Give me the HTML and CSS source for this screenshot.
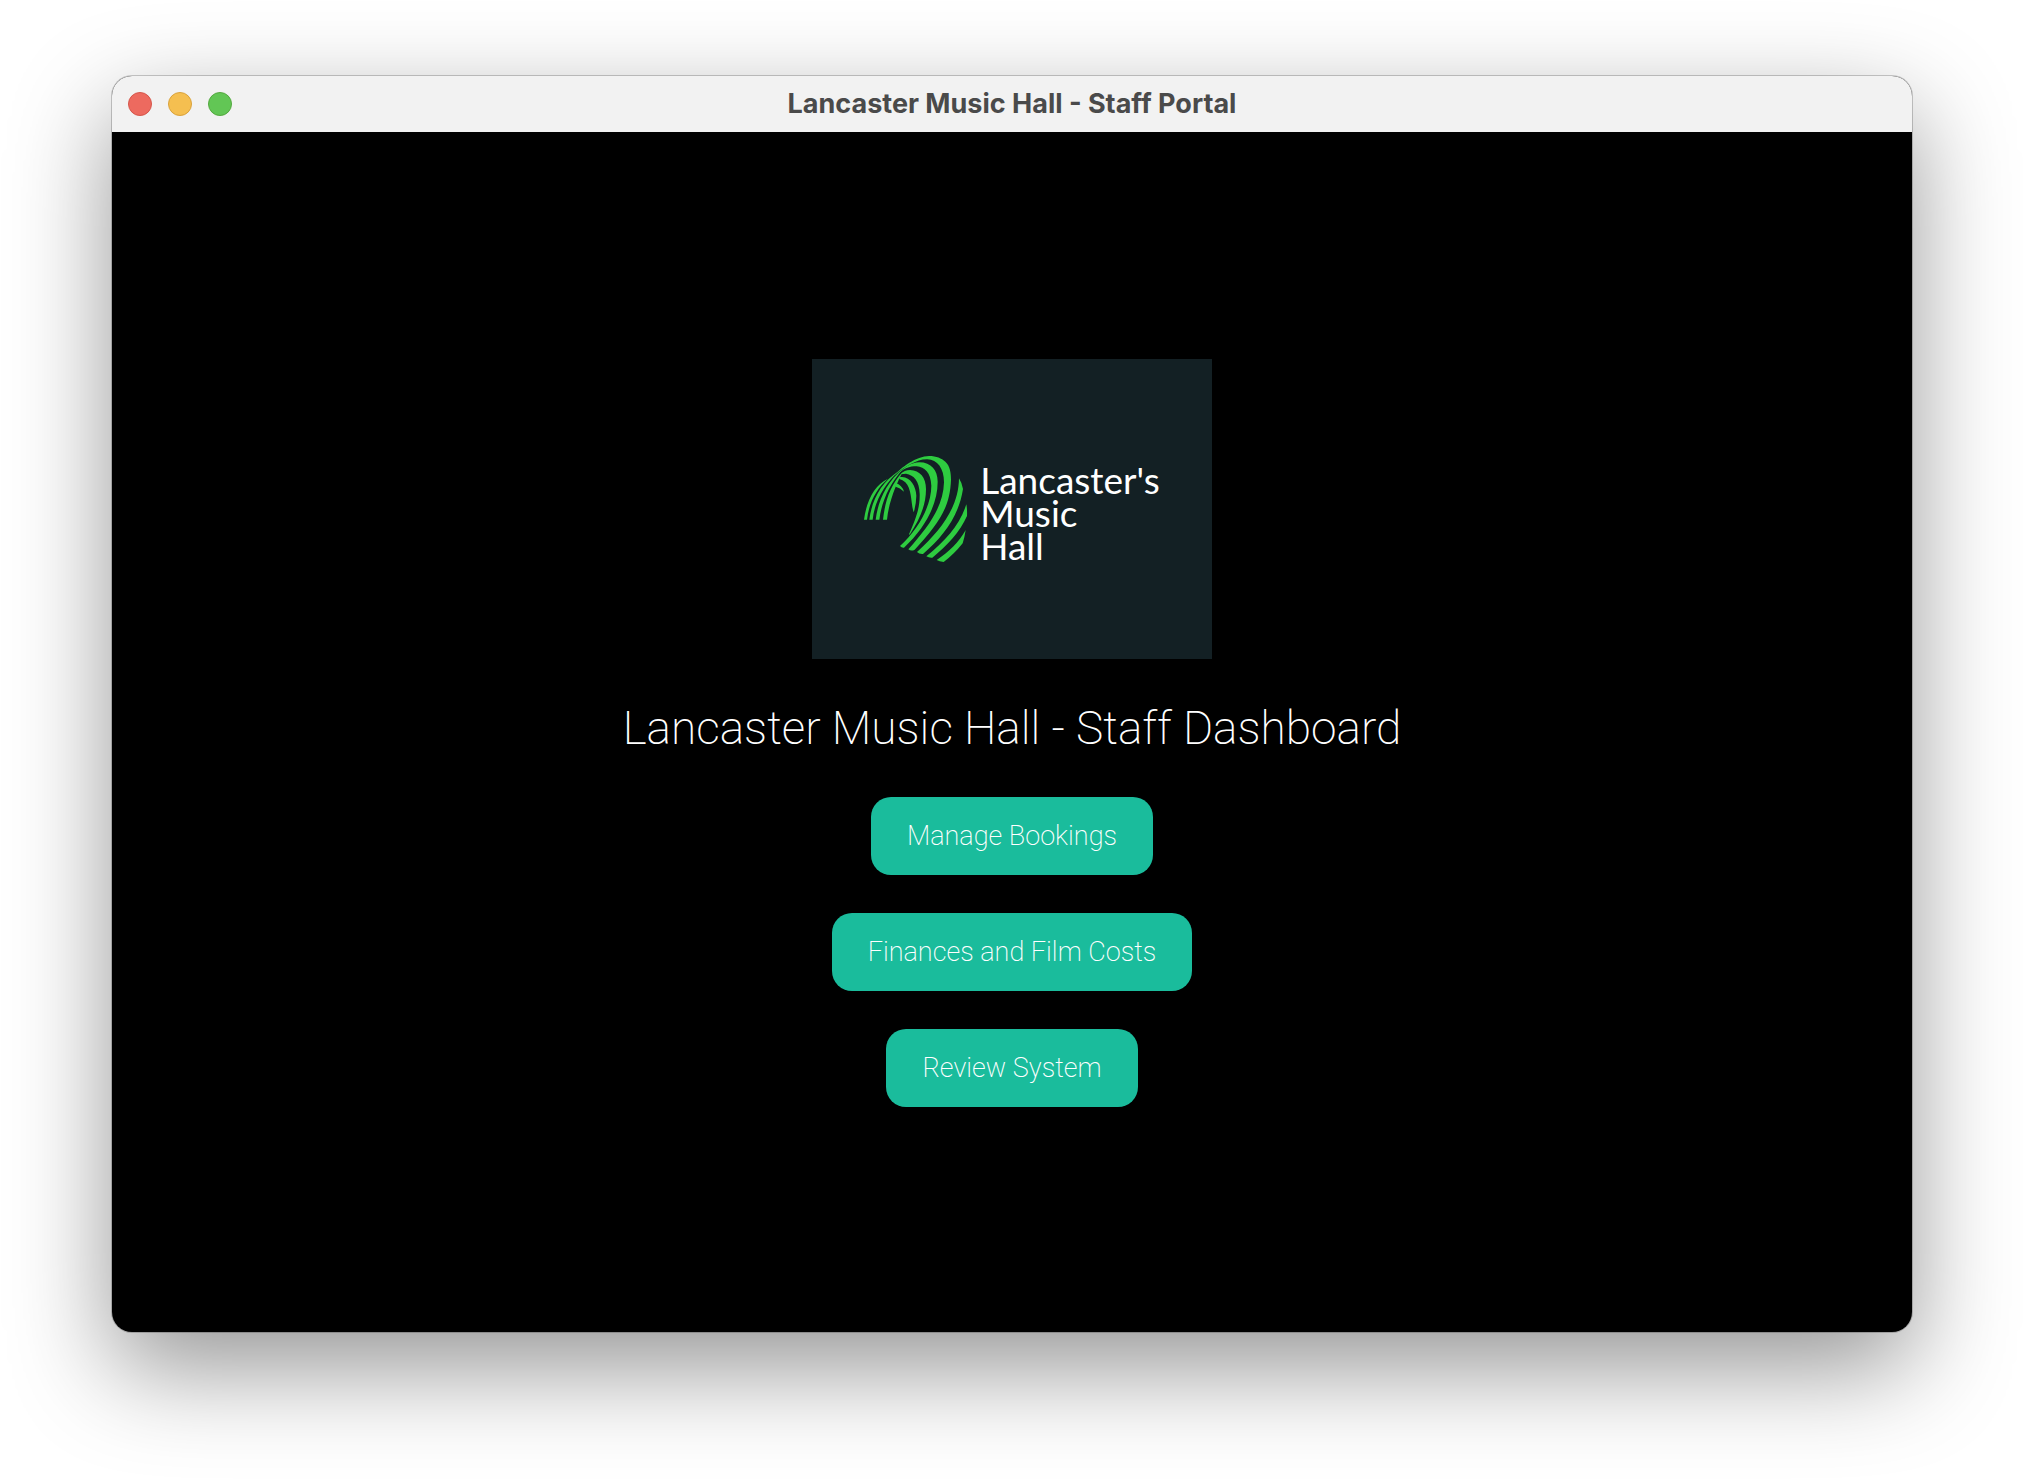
FILE: index.html
```html
<!DOCTYPE html>
<html lang="en">
<head>
  <meta charset="utf-8">
  <meta name="viewport" content="width=device-width, initial-scale=1">
  <title>Lancaster Music Hall - Staff Portal</title>
  <link rel="stylesheet" href="styles.css">
</head>
<body>
  <div class="window">
    <header class="titlebar">
      <div class="controls">
        <button type="button" class="control control-close" aria-label="Close"></button>
        <button type="button" class="control control-minimise" aria-label="Minimise"></button>
        <button type="button" class="control control-zoom" aria-label="Zoom"></button>
      </div>
      <div class="window-title">Lancaster Music Hall - Staff Portal</div>
    </header>
    <main class="dashboard">
      <div class="logo">
        <svg class="logo-mark" viewBox="30 30 312 324" aria-hidden="true">
          <!-- left legs -->
          <path d="M30 224C38 165 62 120 102 101C70 128 45 170 39 224Z"/>
          <path d="M46 224C53 168 80 112 134 79C95 114 62 165 56 224Z"/>
          <path d="M65 224C72 170 94 114 150 68C104 120 83 170 76 224Z"/>
          <path d="M87 224C93 170 108 120 146 81C130 112 105 165 99 224Z"/>
          <!-- arches -->
          <path d="M120 92C140 68 188 33 225 33C248 33 262 40 274 50C288 62 291 84 291 104C288 190 252 238 182 314Q172 320 163 313C226 242 268 184 270 112C270 70 250 44 220 43C190 42 150 66 120 92Z"/>
          <path d="M126 94C150 66 172 52 196 52C232 52 251 76 251 110C251 180 212 250 150 308Q143 309 138 303C196 250 232 180 232 122C230 82 212 66 188 64C166 64 150 68 126 94Z"/>
          <path d="M140 88C148 78 156 75 168 75C198 76 216 98 216 132C216 180 198 222 167 269L165 268C188 216 198 186 197 146C196 108 180 90 156 86Q148 86 140 88Z"/>
          <path d="M136 97C166 90 186 122 187 152Q186 182 179 202C171 180 174 130 154 112Q146 105 136 102Z"/>
          <path d="M125 114Q144 120 150 140Q138 128 125 125Z"/>
          <!-- lower right bands -->
          <path d="M315 100Q324 114 327 132C314 216 266 276 207 327Q196 328 189 321C262 254 314 186 315 100Z"/>
          <path d="M337 178Q340 194 339 213C318 260 280 302 235 338Q225 339 217 334C276 286 318 238 337 178Z"/>
          <path d="M335 255Q332 276 326 295Q300 328 269 351Q256 350 248 345C286 320 314 292 335 255Z"/>
        </svg>
        <div class="logo-name">Lancaster's<br>Music<br>Hall</div>
      </div>
      <h1 class="heading">Lancaster Music Hall - Staff Dashboard</h1>
      <button type="button" class="action">Manage Bookings</button>
      <button type="button" class="action">Finances and Film Costs</button>
      <button type="button" class="action">Review System</button>
    </main>
  </div>
</body>
</html>
```
FILE: styles.css
```css
* {
  box-sizing: border-box;
}

body {
  display: flex;
  min-height: 100vh;
  margin: 0;
  padding: 76px 112px 148px;
  background: #fff;
  font-family: Roboto, "Liberation Sans", sans-serif;
}

.window {
  display: flex;
  flex: 1;
  flex-direction: column;
  overflow: hidden;
  border-radius: 20px;
  background: #000;
  box-shadow: 0 0 0 1px rgba(0, 0, 0, 0.2), 0 36px 100px rgba(0, 0, 0, 0.42);
}

.titlebar {
  display: grid;
  grid-template-columns: 1fr auto 1fr;
  align-items: center;
  height: 56px;
  padding: 0 16px;
  background: #f2f2f2;
}

.controls {
  display: flex;
  gap: 16px;
}

.control {
  width: 24px;
  height: 24px;
  padding: 0;
  border: 1px solid;
  border-radius: 50%;
}

.control-close {
  border-color: #d5564b;
  background: #ed6a5f;
}

.control-minimise {
  border-color: #d9a23c;
  background: #f5bf50;
}

.control-zoom {
  border-color: #54a83f;
  background: #62c655;
}

.window-title {
  color: #4a4a4a;
  font-family: Inter, sans-serif;
  font-size: 27px;
  font-weight: 650;
  line-height: 32px;
}

.dashboard {
  display: flex;
  flex: 1;
  flex-direction: column;
  align-items: center;
  justify-content: center;
  gap: 38px;
  padding-top: 2px;
}

.logo {
  display: flex;
  align-items: center;
  justify-content: center;
  gap: 12px;
  width: 400px;
  height: 300px;
  background: #132024;
}

.logo-mark {
  width: 104px;
  height: 108px;
  fill: #2ecc40;
}

.logo-name {
  padding-top: 6px;
  color: #fff;
  font-family: Lato, sans-serif;
  font-size: 37px;
  line-height: 33px;
}

.heading {
  margin: 0;
  color: #fff;
  font-size: 46px;
  font-weight: 200;
  line-height: 62px;
}

.action {
  height: 78px;
  padding: 0 36px;
  border: 0;
  border-radius: 20px;
  background: #1abc9c;
  color: #fff;
  font-family: inherit;
  font-size: 27px;
  font-weight: 200;
}
```
